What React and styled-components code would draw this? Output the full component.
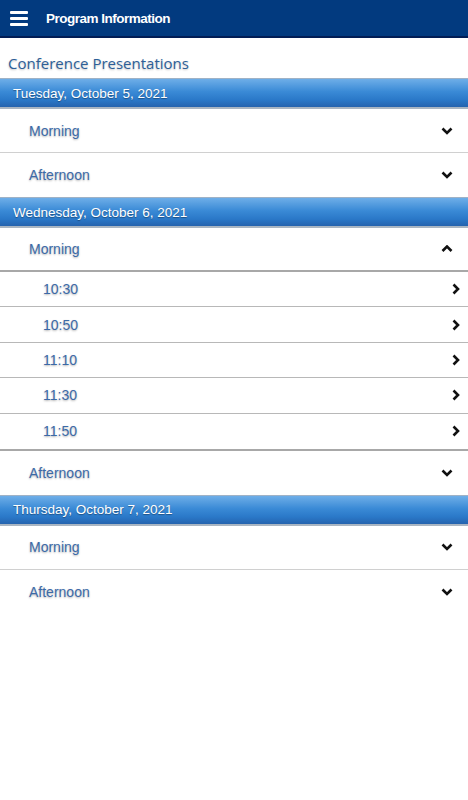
import React from 'react'
import styled, { createGlobalStyle } from 'styled-components'

const Global = createGlobalStyle`
  html, body { margin: 0; padding: 0; background: #fff; }
  body { font-family: "Liberation Sans", Arial, sans-serif; }
`

const days = [
  { label: 'Tuesday, October 5, 2021', sessions: [{ name: 'Morning' }, { name: 'Afternoon' }] },
  {
    label: 'Wednesday, October 6, 2021',
    sessions: [
      { name: 'Morning', open: true, times: ['10:30', '10:50', '11:10', '11:30', '11:50'] },
      { name: 'Afternoon' },
    ],
  },
  { label: 'Thursday, October 7, 2021', sessions: [{ name: 'Morning' }, { name: 'Afternoon' }] },
]

function Chevron({ dir }) {
  const pts = {
    down: '1.5,1.5 6,6 10.5,1.5',
    up: '1.5,6 6,1.5 10.5,6',
    right: '1.5,1.5 6,6 1.5,10.5',
  }[dir]
  const side = dir === 'right'
  return (
    <svg width={side ? 8 : 12} height={side ? 12 : 8} viewBox={side ? '0 0 8 12' : '0 0 12 8'}>
      <polyline points={pts} fill="none" stroke="#111" strokeWidth="2.6" />
    </svg>
  )
}

export default function App() {
  return (
    <Page>
      <Global />
      <TopBar>
        <Burger>
          <span />
          <span />
          <span />
        </Burger>
        <Title>Program Information</Title>
      </TopBar>
      <Heading>Conference Presentations</Heading>
      {days.map((d) => (
        <div key={d.label}>
          <DayBar>{d.label}</DayBar>
          {d.sessions.map((s, si) => (
            <div key={s.name}>
              <SessionRow $open={s.open} $last={si === d.sessions.length - 1}>
                <RowText>{s.name}</RowText>
                <Chevron dir={s.open ? 'up' : 'down'} />
              </SessionRow>
              {s.times && (
                <TimeList>
                  {s.times.map((t, i) => (
                    <TimeRow key={t} $last={i === s.times.length - 1}>
                      <RowText>{t}</RowText>
                      <Chevron dir="right" />
                    </TimeRow>
                  ))}
                </TimeList>
              )}
            </div>
          ))}
        </div>
      ))}
    </Page>
  )
}

const Page = styled.div`
  width: 468px;
  min-height: 800px;
  background: #fff;
`

const TopBar = styled.div`
  height: 36px;
  background: #023a7f;
  border-bottom: 2px solid #021d55;
  display: flex;
  align-items: center;
  padding-left: 10px;
`

const Burger = styled.div`
  width: 18px;
  display: flex;
  flex-direction: column;
  gap: 3px;
  margin-right: 18px;
  span {
    display: block;
    height: 3px;
    background: #fff;
    border-radius: 1px;
  }
`

const Title = styled.div`
  color: #fff;
  font-weight: bold;
  font-size: 13.5px;
  letter-spacing: -0.5px;
`

const Heading = styled.div`
  font-family: "Open Sans", "Noto Sans", sans-serif;
  font-size: 15px;
  color: #2d5f98;
  padding: 14px 0 4px 8px;
  line-height: 22px;
  text-shadow: 0 1px 2px rgba(0, 0, 0, 0.25);
`

const DayBar = styled.div`
  height: 28px;
  display: flex;
  align-items: center;
  padding-left: 13px;
  color: #fff;
  font-size: 13.5px;
  background: linear-gradient(#6eaee8 0%, #3a8ad6 45%, #2a78c8 75%, #2563ae 100%);
  border-top: 1px solid #9fb2c6;
  border-bottom: 2px solid #a9b5c2;
  text-shadow: 0 1px 1px rgba(0, 0, 0, 0.35);
`

const SessionRow = styled.div`
  height: 44px;
  display: flex;
  align-items: center;
  justify-content: space-between;
  padding: 0 15px 0 29px;
  box-sizing: border-box;
  border-bottom: ${(p) =>
    p.$open ? '2px solid #a8a8a8' : p.$last ? 'none' : '1px solid #d0d0d0'};
`

const TimeList = styled.div`
  border-bottom: 2px solid #a8a8a8;
`

const TimeRow = styled.div`
  height: 35.4px;
  display: flex;
  align-items: center;
  justify-content: space-between;
  padding: 0 8px 0 43px;
  box-sizing: border-box;
  border-bottom: ${(p) => (p.$last ? 'none' : '1px solid #b8b8b8')};
`

const RowText = styled.span`
  font-size: 14px;
  color: #3c6aa8;
  text-shadow: 0 1px 2px rgba(0, 0, 0, 0.3);
`
